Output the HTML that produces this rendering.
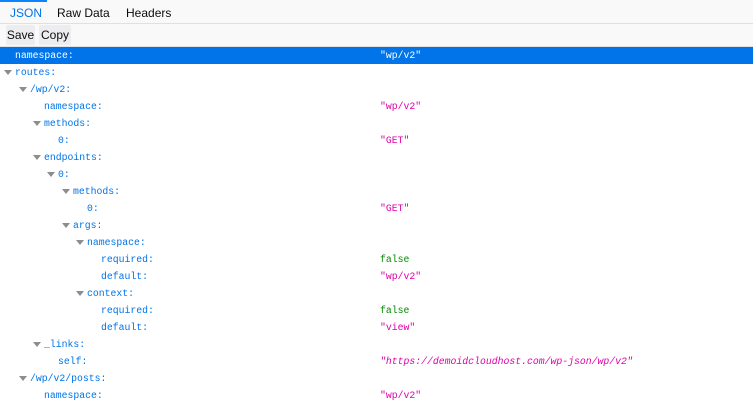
<!DOCTYPE html>
<html><head><meta charset="utf-8"><style>
*{margin:0;padding:0;box-sizing:border-box}
body{width:753px;height:408px;overflow:hidden;background:#fff;font-family:"Liberation Sans",sans-serif;position:relative}
.tabs{position:absolute;left:0;top:0;width:753px;height:24px;background:#f9f9fa;border-bottom:1px solid #e0e0e2}
.tab{position:absolute;top:0;height:24px;line-height:26px;font-size:12px;color:#0c0c0d}
.tab.sel{color:#0074e8;border-top:2px solid #0a84ff;line-height:22px}
.bar{position:absolute;left:0;top:24px;width:753px;height:23px;background:#f9f9fa;border-bottom:1px solid #e0e0e2}
.btn{position:absolute;top:1px;height:20px;line-height:20px;font-size:12px;color:#0c0c0d;background:#ededf0;border-radius:2px;text-align:center}
.row{position:absolute;left:0;width:753px;height:17px;line-height:17px;font-family:"Liberation Mono",monospace;font-size:9.8px;color:#0074e8}
.row.sel{background:#0074e8;color:#fff}
.row .k{position:absolute;top:0}
.row .v{position:absolute;left:380px;top:0}
.s{color:#dd00a9}.b{color:#058b00}.i{font-style:italic}
.row.sel .v{color:#fff}
.t{position:absolute;top:6px;width:0;height:0;border-left:4px solid transparent;border-right:4px solid transparent;border-top:5px solid #8d8d8e}
</style></head><body>
<div class="tabs">
<div class="tab sel" style="left:0;width:47px;padding-left:10px">JSON</div>
<div class="tab" style="left:57px">Raw Data</div>
<div class="tab" style="left:126px">Headers</div>
</div>
<div class="bar">
<div class="btn" style="left:6px;width:29px">Save</div>
<div class="btn" style="left:39px;width:32px">Copy</div>
</div>

<div class="row sel" style="top:47px"><span class="k" style="left:15px">namespace:</span><span class="v">"wp/v2"</span></div>
<div class="row" style="top:64px"><i class="t" style="left:4px"></i><span class="k" style="left:15px">routes:</span></div>
<div class="row" style="top:81px"><i class="t" style="left:19px"></i><span class="k" style="left:30px">/wp/v2:</span></div>
<div class="row" style="top:98px"><span class="k" style="left:44px">namespace:</span><span class="v s">"wp/v2"</span></div>
<div class="row" style="top:115px"><i class="t" style="left:33px"></i><span class="k" style="left:44px">methods:</span></div>
<div class="row" style="top:132px"><span class="k" style="left:58px">0:</span><span class="v s">"GET"</span></div>
<div class="row" style="top:149px"><i class="t" style="left:33px"></i><span class="k" style="left:44px">endpoints:</span></div>
<div class="row" style="top:166px"><i class="t" style="left:47px"></i><span class="k" style="left:58px">0:</span></div>
<div class="row" style="top:183px"><i class="t" style="left:62px"></i><span class="k" style="left:73px">methods:</span></div>
<div class="row" style="top:200px"><span class="k" style="left:87px">0:</span><span class="v s">"GET"</span></div>
<div class="row" style="top:217px"><i class="t" style="left:62px"></i><span class="k" style="left:73px">args:</span></div>
<div class="row" style="top:234px"><i class="t" style="left:76px"></i><span class="k" style="left:87px">namespace:</span></div>
<div class="row" style="top:251px"><span class="k" style="left:101px">required:</span><span class="v b">false</span></div>
<div class="row" style="top:268px"><span class="k" style="left:101px">default:</span><span class="v s">"wp/v2"</span></div>
<div class="row" style="top:285px"><i class="t" style="left:76px"></i><span class="k" style="left:87px">context:</span></div>
<div class="row" style="top:302px"><span class="k" style="left:101px">required:</span><span class="v b">false</span></div>
<div class="row" style="top:319px"><span class="k" style="left:101px">default:</span><span class="v s">"view"</span></div>
<div class="row" style="top:336px"><i class="t" style="left:33px"></i><span class="k" style="left:44px">_links:</span></div>
<div class="row" style="top:353px"><span class="k" style="left:58px">self:</span><span class="v s i">"https://demoidcloudhost.com/wp-json/wp/v2"</span></div>
<div class="row" style="top:370px"><i class="t" style="left:19px"></i><span class="k" style="left:30px">/wp/v2/posts:</span></div>
<div class="row" style="top:387px"><span class="k" style="left:44px">namespace:</span><span class="v s">"wp/v2"</span></div>
</body></html>
